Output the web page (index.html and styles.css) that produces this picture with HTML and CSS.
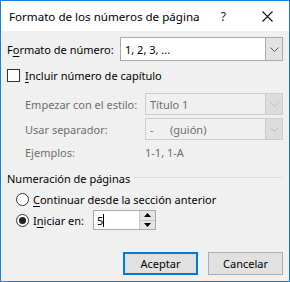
FILE: index.html
```html
<!DOCTYPE html>
<html lang="es">
<head>
<meta charset="utf-8">
<link rel="stylesheet" href="styles.css">
</head>
<body>
<div class="window">
  <div class="titlebar">
    <span class="title">Formato de los números de página</span>
    <span class="help">?</span>
    <svg class="close" width="11" height="11" viewBox="0 0 11 11"><path d="M0.5 0.5L10.5 10.5M10.5 0.5L0.5 10.5" stroke="#111" stroke-width="1.1" fill="none"/></svg>
  </div>
  <div class="content">
    <div class="row-format">
      <span class="label">F<u>o</u>rmato de número:</span>
      <div class="combo">
        <span class="combo-text">1, 2, 3, ...</span>
        <span class="combo-btn"><svg width="9" height="5" viewBox="0 0 9 5"><path d="M0.5 0.5L4.5 4.5L8.5 0.5" stroke="#555" fill="none"/></svg></span>
      </div>
    </div>
    <div class="row-check">
      <span class="checkbox"></span>
      <span><u>I</u>ncluir número de capítulo</span>
    </div>
    <div class="chapter">
      <div class="crow">
        <span class="dlabel">Empezar con el estilo:</span>
        <div class="combo disabled">
          <span class="combo-text">Título 1</span>
          <span class="combo-btn"><svg width="9" height="5" viewBox="0 0 9 5"><path d="M0.5 0.5L4.5 4.5L8.5 0.5" stroke="#bcbcbc" fill="none"/></svg></span>
        </div>
      </div>
      <div class="crow">
        <span class="dlabel">Usar separador:</span>
        <div class="combo disabled">
          <span class="combo-text"><span class="dash">-</span>(guión)</span>
          <span class="combo-btn"><svg width="9" height="5" viewBox="0 0 9 5"><path d="M0.5 0.5L4.5 4.5L8.5 0.5" stroke="#bcbcbc" fill="none"/></svg></span>
        </div>
      </div>
      <div class="crow ex">
        <span class="dlabel">Ejemplos:</span>
        <span class="dval">1-1, 1-A</span>
      </div>
    </div>
    <div class="group-head">
      <span>Numeración de páginas</span>
      <span class="line"></span>
    </div>
    <div class="radio-row r1">
      <span class="radio"></span>
      <span><u>C</u>ontinuar desde la sección anterior</span>
    </div>
    <div class="radio-row r2">
      <span class="radio checked"></span>
      <span class="start-label">I<u>n</u>iciar en:</span>
      <div class="spin">
        <span class="spin-text">5<span class="caret"></span></span>
        <span class="spin-btns">
          <span class="sb"><svg width="7" height="4" viewBox="0 0 7 4"><path d="M0 4L3.5 0L7 4Z" fill="#000"/></svg></span>
          <span class="sb"><svg width="7" height="4" viewBox="0 0 7 4"><path d="M0 0L3.5 4L7 0Z" fill="#000"/></svg></span>
        </span>
      </div>
    </div>
    <div class="buttons">
      <button class="btn default">Aceptar</button>
      <button class="btn">Cancelar</button>
    </div>
  </div>
</div>
</body>
</html>
```

FILE: styles.css
```css
html, body {
  margin: 0;
  padding: 0;
  background: #f0f0f0;
}
body {
  font-family: "Noto Sans", "Open Sans", sans-serif;
  font-size: 11px;
  color: #000;
  white-space: nowrap;
}
u { text-decoration: underline; text-underline-offset: 2px; }
.window {
  width: 290px;
  height: 282px;
  box-sizing: border-box;
  border: 1px solid #1c7fd6;
  background: #f0f0f0;
  display: flex;
  flex-direction: column;
}
.titlebar {
  height: 30px;
  background: #fff;
  display: flex;
  align-items: center;
  padding-left: 8px;
  flex: none;
}
.title {
  font-size: 11.6px;
  flex: 1;
}
.help {
  font-size: 12px;
  color: #222;
  margin-right: 36px;
}
.close {
  margin-right: 16px;
}
.content {
  padding: 6px 6px 0 6px;
  display: flex;
  flex-direction: column;
}
.row-format {
  display: flex;
  align-items: center;
  height: 24px;
}
.row-format .label {
  width: 113px;
}
.combo {
  flex: 1;
  height: 24px;
  box-sizing: border-box;
  border: 1px solid #a9a9a9;
  background: #fff;
  display: flex;
  align-items: center;
}
.combo-text {
  flex: 1;
  padding-left: 4px;
}
.combo-btn {
  width: 16px;
  height: 100%;
  background: #e3e3e3;
  border-left: 1px solid #a9a9a9;
  display: flex;
  align-items: center;
  justify-content: center;
}
.row-check {
  display: flex;
  align-items: center;
  margin-top: 7px;
  height: 14px;
}
.checkbox {
  width: 13px;
  height: 13px;
  box-sizing: border-box;
  border: 1px solid #333;
  background: #fff;
  margin-right: 5px;
}
.chapter {
  padding-left: 18px;
  color: #6d6d6d;
  margin-top: 11px;
  display: flex;
  flex-direction: column;
  gap: 3px;
}
.crow {
  display: flex;
  align-items: center;
  height: 22px;
}
.crow .dlabel {
  width: 120px;
}
.combo.disabled {
  height: 22px;
  border-color: #cccccc;
  background: #f0f0f0;
}
.combo.disabled .combo-btn {
  background: #dcdcdc;
  border-left-color: #cccccc;
}
.dash {
  display: inline-block;
  width: 20px;
}
.crow.ex {
  height: 18px;
}
.group-head {
  display: flex;
  align-items: center;
  margin-top: 8px;
  height: 18px;
}
.group-head .line {
  flex: 1;
  height: 1px;
  background: #dcdcdc;
  margin-left: 4px;
  margin-top: -2px;
}
.radio-row {
  display: flex;
  align-items: center;
  padding-left: 9px;
}
.r1 { margin-top: 3px; height: 18px; }
.r2 { margin-top: 2px; height: 20px; }
.radio {
  width: 13px;
  height: 13px;
  box-sizing: border-box;
  border: 1px solid #333;
  border-radius: 50%;
  background: #fff;
  margin-right: 4px;
  display: flex;
  align-items: center;
  justify-content: center;
}
.radio.checked::after {
  content: "";
  width: 7px;
  height: 7px;
  border-radius: 50%;
  background: #222;
}
.start-label {
  width: 60px;
}
.spin {
  width: 63px;
  height: 20px;
  box-sizing: border-box;
  border: 1px solid #a9a9a9;
  background: #fff;
  display: flex;
}
.spin-text {
  flex: 1;
  padding-left: 3px;
  display: flex;
  align-items: center;
}
.caret {
  width: 1px;
  height: 13px;
  background: #000;
}
.spin-btns {
  width: 15px;
  display: flex;
  flex-direction: column;
  border-left: 1px solid #c8c8c8;
}
.sb {
  flex: 1;
  background: #e5e5e5;
  display: flex;
  align-items: center;
  justify-content: center;
}
.sb + .sb {
  border-top: 1px solid #c8c8c8;
}
.buttons {
  display: flex;
  justify-content: flex-end;
  gap: 10px;
  margin-top: 22px;
}
.btn {
  width: 75px;
  height: 23px;
  box-sizing: border-box;
  border: 1px solid #adadad;
  background: #e1e1e1;
  font-family: "Noto Sans", "Open Sans", sans-serif;
  font-size: 11px;
  color: #000;
  padding: 0;
}
.btn.default {
  border: 2px solid #0078d7;
}
```
